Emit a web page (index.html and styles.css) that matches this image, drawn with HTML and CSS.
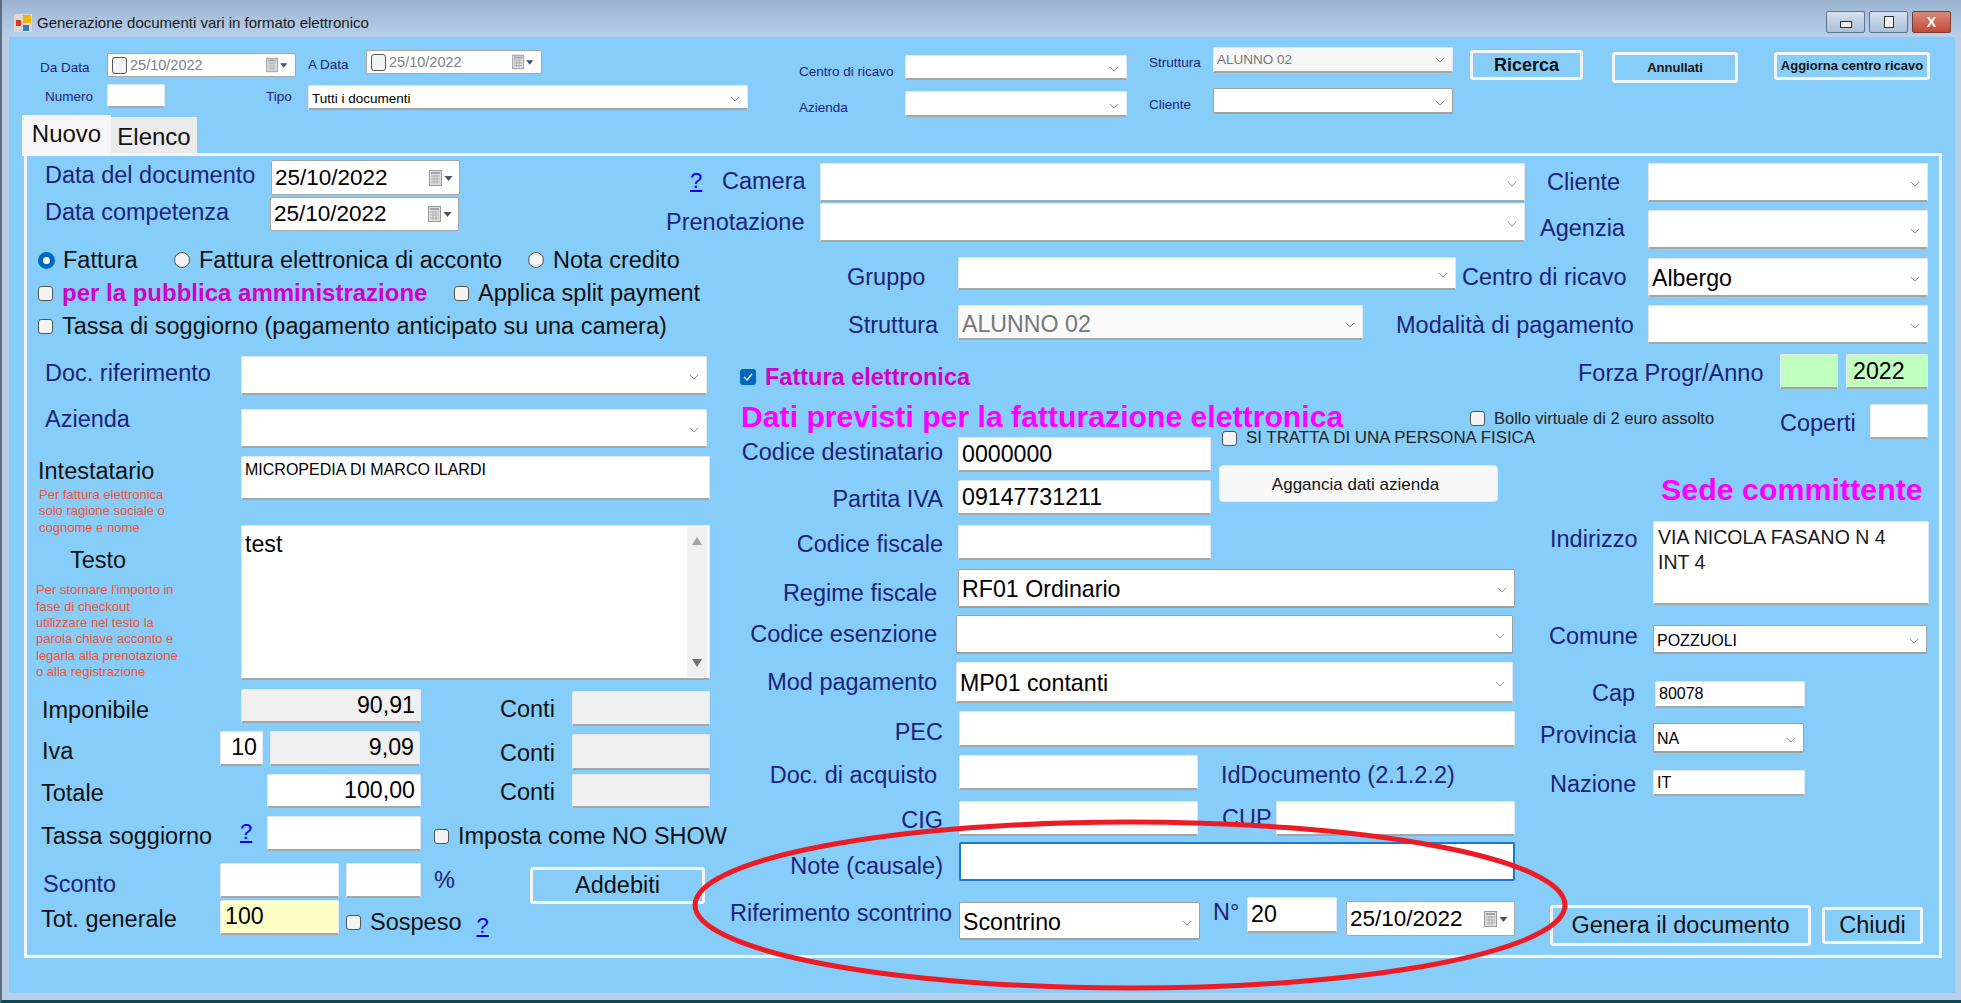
FILE: index.html
```html
<!DOCTYPE html>
<html lang="it">
<head>
    <meta charset="UTF-8">
    <title>Generazione documenti vari in formato elettronico</title>
    <link rel="stylesheet" href="styles.css">
</head>
<body>
<svg class="defs" width="0" height="0">
    <symbol id="chev" viewBox="0 0 12 7"><path d="M1 1l5 5 5-5" fill="none" stroke="#808080" stroke-width="1.1"/></symbol>
    <symbol id="cal" viewBox="0 0 26 20">
        <rect x="1.5" y="2.5" width="12" height="15" fill="#dedede" stroke="#999"/>
        <rect x="3" y="4" width="9" height="2" fill="#9aa6b4"/>
        <path d="M3 8h9M3 11h9M3 14h9M6 7v9M9 7v9" stroke="#b0b0b0" fill="none"/>
        <path d="M16.500 8h8l-4 5z" fill="#44546a"/>
    </symbol>
</svg>

<div class="window">
    <div class="titlebar">
        <svg class="appicon" width="18" height="18" viewBox="0 0 18 18">
            <rect width="18" height="18" fill="#d9d9d9"/>
            <rect x="9" y="1" width="8" height="8" fill="#f4b400"/>
            <rect x="2" y="6" width="5" height="6" fill="#d8361f"/>
            <rect x="9" y="11" width="6" height="6" fill="#3b78c4"/>
        </svg>
        <span class="title">Generazione documenti vari in formato elettronico</span>
        <div class="winbtns">
            <div class="winbtn"><span class="g-min"></span></div>
            <div class="winbtn"><span class="g-max"></span></div>
            <div class="winbtn close">X</div>
        </div>
    </div>

    <div class="client">
        <div class="filters">
            <div class="fgroup mt-13 ml-31">
                <div class="row h-34">
                    <div class="lb sm w-67 mt-10">Da Data</div>
                    <div class="fld date small w-189 h-24 mt-3"><i class="cb-sm"></i><span class="grey">25/10/2022</span><svg class="calicon"><use href="#cal"/></svg></div>
                    <div class="lb sm w-58 ml-12 mt-7">A Data</div>
                    <div class="fld date small w-176 h-24"><i class="cb-sm"></i><span class="grey">25/10/2022</span><svg class="calicon"><use href="#cal"/></svg></div>
                </div>
                <div class="row">
                    <div class="lb sm w-62 ml-5 mt-5">Numero</div>
                    <div class="fld w-58 h-24"></div>
                    <div class="lb sm w-42 ml-101 mt-5">Tipo</div>
                    <div class="fld cmb small w-440 h-25 mt-1">Tutti i documenti<svg class="chev"><use href="#chev"/></svg></div>
                </div>
            </div>
            <div class="fgroup mt-18 ml-51">
                <div class="row h-36">
                    <div class="lb sm w-106 mt-9">Centro di ricavo</div>
                    <div class="fld cmb w-222 h-25"><svg class="chev"><use href="#chev"/></svg></div>
                </div>
                <div class="row">
                    <div class="lb sm w-106 mt-9">Azienda</div>
                    <div class="fld cmb w-222 h-26"><svg class="chev"><use href="#chev"/></svg></div>
                </div>
            </div>
            <div class="fgroup mt-10 ml-22">
                <div class="row h-41">
                    <div class="lb sm w-64 mt-8">Struttura</div>
                    <div class="fld cmb small off w-240 h-26">ALUNNO 02<svg class="chev"><use href="#chev"/></svg></div>
                </div>
                <div class="row">
                    <div class="lb sm w-64 mt-9">Cliente</div>
                    <div class="fld cmb dark w-240 h-26"><svg class="chev"><use href="#chev"/></svg></div>
                </div>
            </div>
            <div class="btn b-search ml-17 mt-13 w-113 h-30">Ricerca</div>
            <div class="btn b-small ml-29 mt-15 w-126 h-31">Annullati</div>
            <div class="btn b-small b-top ml-36 mt-15 w-156 h-28">Aggiorna centro ricavo</div>
        </div>

        <div class="tabs">
            <div class="tab active">Nuovo</div>
            <div class="tab">Elenco</div>
        </div>

        <div class="panel">
            <div class="col-left">
                <div class="row mt-4 h-35">
                    <div class="lb w-226 ml-18 mt-2">Data del documento</div>
                    <div class="fld date w-189 h-35">25/10/2022<svg class="calicon"><use href="#cal"/></svg></div>
                </div>
                <div class="row mt-2 h-34">
                    <div class="lb w-225 ml-18 mt-2">Data competenza</div>
                    <div class="fld date w-189 h-34">25/10/2022<svg class="calicon"><use href="#cal"/></svg></div>
                </div>
                <div class="row mt-16 ml-11">
                    <div class="opt w-136"><i class="radio on"></i>Fattura</div>
                    <div class="opt w-354"><i class="radio"></i>Fattura elettronica di acconto</div>
                    <div class="opt"><i class="radio"></i>Nota credito</div>
                </div>
                <div class="row mt-7 ml-11">
                    <div class="opt w-416"><i class="cb"></i><b class="pa">per la pubblica amministrazione</b></div>
                    <div class="opt"><i class="cb"></i>Applica split payment</div>
                </div>
                <div class="row mt-7 ml-11">
                    <div class="opt"><i class="cb"></i>Tassa di soggiorno (pagamento anticipato su una camera)</div>
                </div>
                <div class="row mt-17 h-39">
                    <div class="lb w-196 ml-18 mt-4">Doc. riferimento</div>
                    <div class="fld cmb w-466 h-39"><svg class="chev"><use href="#chev"/></svg></div>
                </div>
                <div class="row mt-14 h-39">
                    <div class="lb w-196 ml-18 mt-n3">Azienda</div>
                    <div class="fld cmb w-466 h-39"><svg class="chev"><use href="#chev"/></svg></div>
                </div>
                <div class="row mt-8">
                    <div class="w-214">
                        <div class="lb k ml-11 mt-2">Intestatario</div>
                        <div class="note ml-12 mt-3">Per fattura elettronica<br>solo ragione sociale o<br>cognome e nome</div>
                        <div class="lb k ml-43 mt-11">Testo</div>
                        <div class="note ml-9 mt-9">Per stornare l'importo in<br>fase di checkout<br>utilizzare nel testo la<br>parola chiave acconto e<br>legarla alla prenotazione<br>o alla registrazione</div>
                    </div>
                    <div>
                        <div class="fld area int w-469 h-44"><span class="tx16">MICROPEDIA DI MARCO ILARDI</span></div>
                        <div class="fld area memo w-469 h-155 mt-25">test
                            <div class="vscroll"><span class="sb-up"></span><span class="sb-dn"></span></div>
                        </div>
                    </div>
                </div>
                <div class="row mt-8 h-42">
                    <div class="lb k w-199 ml-15 mt-8">Imponibile</div>
                    <div class="fld num off w-180 h-34">90,91</div>
                    <div class="lb k w-72 ml-79 mt-7">Conti</div>
                    <div class="fld off w-138 h-35 mt-2"></div>
                </div>
                <div class="row h-43">
                    <div class="lb k w-178 ml-15 mt-7">Iva</div>
                    <div class="fld num w-43 h-35">10</div>
                    <div class="fld num off w-150 h-35 ml-7">9,09</div>
                    <div class="lb k w-72 ml-80 mt-9">Conti</div>
                    <div class="fld off w-138 h-36 mt-3"></div>
                </div>
                <div class="row h-42">
                    <div class="lb k w-226 ml-14 mt-6">Totale</div>
                    <div class="fld num w-154 h-34">100,00</div>
                    <div class="lb k w-72 ml-79 mt-5">Conti</div>
                    <div class="fld off w-138 h-34"></div>
                </div>
                <div class="row h-47">
                    <div class="lb k w-199 ml-14 mt-7">Tassa soggiorno</div>
                    <a class="lb help w-27 mt-3" href="#">?</a>
                    <div class="fld w-154 h-35"></div>
                    <div class="opt ml-13 mt-8"><i class="cb"></i>Imposta come NO SHOW</div>
                </div>
                <div class="row h-37">
                    <div class="lb w-177 ml-16 mt-8">Sconto</div>
                    <div class="fld w-119 h-35"></div>
                    <div class="fld w-75 h-35 ml-7"></div>
                    <div class="lb w-96 ml-13 mt-4">%</div>
                    <div class="btn b-big w-175 h-37 mt-4">Addebiti</div>
                </div>
                <div class="row">
                    <div class="lb k w-179 ml-14 mt-6">Tot. generale</div>
                    <div class="fld yellow w-119 h-35">100</div>
                    <div class="opt ml-7 mt-10"><i class="cb"></i>Sospeso</div>
                    <a class="lb help ml-15 mt-13" href="#">?</a>
                </div>
            </div>

            <div class="col-main">
                <div class="top-rows">
                    <div class="row mt-7 h-40">
                        <a class="lb help w-32 ml-24 mt-5" href="#">?</a>
                        <div class="lb w-98 mt-5">Camera</div>
                        <div class="fld cmb w-705 h-39"><svg class="chev"><use href="#chev"/></svg></div>
                        <div class="lb w-101 ml-22 mt-6">Cliente</div>
                        <div class="fld cmb w-280 h-39"><svg class="chev"><use href="#chev"/></svg></div>
                    </div>
                    <div class="row h-46">
                        <div class="lb w-154 mt-6">Prenotazione</div>
                        <div class="fld cmb w-705 h-39"><svg class="chev"><use href="#chev"/></svg></div>
                        <div class="lb w-108 ml-15 mt-12">Agenzia</div>
                        <div class="fld cmb w-280 h-39 mt-7"><svg class="chev"><use href="#chev"/></svg></div>
                    </div>
                </div>
                <div class="row mt-8 h-48">
                    <div class="lb w-111 ml-117 mt-7">Gruppo</div>
                    <div class="fld cmb w-498 h-33"><svg class="chev"><use href="#chev"/></svg></div>
                    <div class="lb w-186 ml-6 mt-7">Centro di ricavo</div>
                    <div class="fld cmb w-280 h-39 mt-1">Albergo<svg class="chev"><use href="#chev"/></svg></div>
                </div>
                <div class="row h-49">
                    <div class="lb w-110 ml-118 mt-7">Struttura</div>
                    <div class="fld cmb off-cmb w-405 h-35">ALUNNO 02<svg class="chev"><use href="#chev"/></svg></div>
                    <div class="lb w-252 ml-33 mt-7">Modalità di pagamento</div>
                    <div class="fld cmb w-280 h-39"><svg class="chev"><use href="#chev"/></svg></div>
                </div>
                <div class="row h-46">
                    <div class="opt w-838 ml-10 mt-10 fe"><i class="cb blue"><svg viewBox="0 0 16 16"><path d="M4 8l3 3 5-6" fill="none" stroke="#fff" stroke-width="1.4"/></svg></i><b>Fattura elettronica</b></div>
                    <div class="lb w-202 mt-6">Forza Progr/Anno</div>
                    <div class="fld green w-58 h-35"></div>
                    <div class="fld green w-82 h-35 ml-8">2022</div>
                </div>
                <div class="row h-37">
                    <div class="heading w-729 ml-11">Dati previsti per la fatturazione elettronica</div>
                    <div class="opt opt-sm bollo w-310 mt-5"><i class="cb"></i>Bollo virtuale di 2 euro assolto</div>
                    <div class="lb w-90 mt-10">Coperti</div>
                    <div class="fld w-58 h-35 mt-4"></div>
                </div>

                <div class="lower">
                    <div class="lower-left">
                        <div class="row">
                            <div>
                                <div class="row h-43">
                                    <div class="lb r w-213 mt-2">Codice destinatario</div>
                                    <div class="fld w-253 h-35 ml-15">0000000</div>
                                </div>
                                <div class="row h-45">
                                    <div class="lb r w-213 mt-6">Partita IVA</div>
                                    <div class="fld w-253 h-35 ml-15">09147731211</div>
                                </div>
                                <div class="row h-44">
                                    <div class="lb r w-213 mt-6">Codice fiscale</div>
                                    <div class="fld w-253 h-35 ml-15"></div>
                                </div>
                            </div>
                            <div class="ml-8">
                                <div class="opt opt-sm ml-3 mt-n12"><i class="cb"></i>SI TRATTA DI UNA PERSONA FISICA</div>
                                <div class="btn b-light w-279 h-37 mt-14">Aggancia dati azienda</div>
                            </div>
                        </div>
                        <div class="row h-46">
                            <div class="lb r w-207 mt-11">Regime fiscale</div>
                            <div class="fld cmb dark w-557 h-39 ml-21">RF01 Ordinario<svg class="chev"><use href="#chev"/></svg></div>
                        </div>
                        <div class="row h-47">
                            <div class="lb r w-207 mt-6">Codice esenzione</div>
                            <div class="fld cmb dark w-557 h-39 ml-19"><svg class="chev"><use href="#chev"/></svg></div>
                        </div>
                        <div class="row h-49">
                            <div class="lb r w-207 mt-7">Mod pagamento</div>
                            <div class="fld cmb w-557 h-41 ml-19">MP01 contanti<svg class="chev"><use href="#chev"/></svg></div>
                        </div>
                        <div class="row h-44">
                            <div class="lb r w-213 mt-8">PEC</div>
                            <div class="fld w-556 h-36 ml-16"></div>
                        </div>
                        <div class="row h-46">
                            <div class="lb r w-207 mt-7">Doc. di acquisto</div>
                            <div class="fld w-239 h-35 ml-22"></div>
                            <div class="lb ml-23 mt-7">IdDocumento (2.1.2.2)</div>
                        </div>
                        <div class="row h-41">
                            <div class="lb r w-213 mt-6">CIG</div>
                            <div class="fld w-239 h-35 ml-16"></div>
                            <div class="lb w-54 ml-24 mt-4">CUP</div>
                            <div class="fld w-239 h-35"></div>
                        </div>
                        <div class="row h-55">
                            <div class="lb r w-213 mt-11">Note (causale)</div>
                            <div class="fld focus w-556 h-39 ml-16"></div>
                        </div>
                        <div class="row">
                            <div class="lb w-220 mt-3">Riferimento scontrino</div>
                            <div class="fld cmb dark w-241 h-38 ml-9 mt-5">Scontrino<svg class="chev"><use href="#chev"/></svg></div>
                            <div class="lb w-34 ml-13 mt-2">N°</div>
                            <div class="fld w-90 h-36">20</div>
                            <div class="fld date w-169 h-35 ml-9 mt-4">25/10/2022<svg class="calicon"><use href="#cal"/></svg></div>
                        </div>
                    </div>

                    <div class="lower-right">
                        <div class="heading sede ml-121 mt-35">Sede committente</div>
                        <div class="row mt-15">
                            <div class="lb w-103 ml-10 mt-5">Indirizzo</div>
                            <div class="fld area addr w-276 h-84">VIA NICOLA FASANO N 4<br>INT 4</div>
                        </div>
                        <div class="row mt-20">
                            <div class="lb w-104 ml-9 mt-n2">Comune</div>
                            <div class="fld cmb dark tx16 w-274 h-29">POZZUOLI<svg class="chev"><use href="#chev"/></svg></div>
                        </div>
                        <div class="row mt-27">
                            <div class="lb w-63 ml-52 mt-n1">Cap</div>
                            <div class="fld tx16 w-150 h-27">80078</div>
                        </div>
                        <div class="row mt-15">
                            <div class="lb w-113 mt-n1">Provincia</div>
                            <div class="fld cmb dark tx16 w-151 h-30">NA<svg class="chev"><use href="#chev"/></svg></div>
                        </div>
                        <div class="row mt-17">
                            <div class="lb w-103 ml-10 mt-1">Nazione</div>
                            <div class="fld tx16 w-152 h-26">IT</div>
                        </div>
                        <div class="row mt-108 ml-10">
                            <div class="btn b-big w-261 h-41">Genera il documento</div>
                            <div class="btn b-big w-101 h-37 ml-11 mt-2">Chiudi</div>
                        </div>
                    </div>
                </div>
            </div>
        </div>

        <svg class="circle" width="900" height="190" viewBox="0 0 900 190">
            <ellipse cx="441" cy="88" rx="435" ry="83" fill="none" stroke="#ed1c24" stroke-width="5"/>
        </svg>
    </div>
</div>
</body>
</html>
```

FILE: styles.css
```css
body {
    margin: 0;
    width: 1961px;
    height: 1003px;
    overflow: hidden;
    background: #b9cfe8;
    font-family: "Liberation Sans", Arial, sans-serif;
}
.defs {
    position: absolute;
}
.window {
    height: 1000px;
    border-bottom: 3px solid #0b4a52;
    border-left: 2px solid #5d6f80;
}
.titlebar {
    box-sizing: border-box;
    height: 37px;
    display: flex;
    align-items: center;
    padding-left: 12px;
    padding-top: 8px;
    background: linear-gradient(#9cb4d0, #b8d0ea);
}
.appicon {
    margin-right: 5px;
}
.title {
    font-size: 15px;
    color: #1a1a1a;
}
.winbtns {
    margin-left: auto;
    margin-right: 10px;
    display: flex;
    gap: 4px;
    margin-top: -2px;
}
.winbtn {
    width: 39px;
    height: 22px;
    border: 1px solid #5f7691;
    border-radius: 2px;
    background: linear-gradient(#d5e2f0, #a9bed6);
    display: flex;
    align-items: center;
    justify-content: center;
    box-sizing: border-box;
    font-size: 14px;
    font-weight: bold;
}
.winbtn.close {
    background: linear-gradient(#dc8a78, #c04a38);
    color: #fff;
    border-color: #7d3a30;
}
.g-min {
    width: 10px;
    height: 5px;
    margin-top: 5px;
    background: #eee;
    border: 1px solid #333;
}
.g-max {
    width: 8px;
    height: 10px;
    background: #eee;
    border: 1px solid #333;
}
.client {
    position: relative;
    margin-left: 7px;
    width: 1946px;
    height: 956px;
    background: #87cdfa;
}

.filters {
    height: 78px;
    display: flex;
    align-items: flex-start;
}
.row {
    display: flex;
    align-items: flex-start;
}
.lb {
    display: block;
    height: 26px;
    line-height: 26px;
    font-size: 23.5px;
    color: #1c2378;
    white-space: nowrap;
}
.lb.sm {
    height: 16px;
    line-height: 16px;
    font-size: 13.5px;
}
.lb.k {
    color: #111;
}
.lb.r {
    text-align: right;
}
.help {
    color: #0000ee;
    text-decoration: underline;
    font-size: 22px;
}

.fld {
    box-sizing: border-box;
    display: flex;
    align-items: center;
    background: #fff;
    border: 1px solid #e4e8ec;
    border-bottom: 2px solid #a6a6a6;
    border-radius: 2px;
    padding-left: 3px;
    font-size: 23.2px;
    color: #000;
    white-space: nowrap;
}
.fld.small {
    font-size: 13.5px;
}
.cmb {
    padding-right: 7px;
    padding-top: 3px;
}
.chev {
    width: 10px;
    height: 6px;
    flex: none;
    margin-left: auto;
    margin-top: 1px;
}
.dark {
    border: 1px solid #a0a0a0;
    border-bottom: 2px solid #a0a0a0;
}
.off {
    background: #f0f0f0;
}
.small.off {
    background: #f6f6f6;
    color: #777;
    padding-top: 0;
}
.off-cmb {
    background: #fafafa;
    color: #777;
    padding-top: 5px;
}
.num {
    justify-content: flex-end;
    padding-right: 5px;
}
.yellow {
    background: #ffffc8;
    padding-left: 4px;
}
.green {
    background: #c0ffc0;
    padding-left: 6px;
}
.focus {
    border: 2px solid #1a78d0;
}
.date {
    border: 1px solid #a6a6a6;
    padding-right: 5px;
    font-size: 22.5px;
}
.calicon {
    width: 26px;
    height: 20px;
    margin-left: auto;
    flex: none;
}
.date.small {
    padding-left: 4px;
    font-size: 14.5px;
}
.date.small .calicon {
    transform: scale(.9);
}
.cb-sm {
    width: 13px;
    height: 15px;
    margin-right: 3px;
    border: 1px solid #555;
    border-radius: 3px;
    background: #f4f4f4;
    flex: none;
}
.grey {
    color: #808080;
}
.area {
    align-items: flex-start;
    padding-top: 2px;
    position: relative;
}
.int {
    padding-top: 4px;
}
.memo {
    padding-top: 5px;
    line-height: 26px;
}
.tx16 {
    font-size: 16px;
}
.addr {
    display: block;
    font-size: 19.5px;
    line-height: 25px;
    padding-left: 4px;
    padding-top: 3px;
    color: #1a1a1a;
}
.vscroll {
    position: absolute;
    top: 1px;
    bottom: 1px;
    right: 2px;
    width: 20px;
    background: #f0f0f0;
}
.sb-up,
.sb-dn {
    position: absolute;
    left: 5px;
    width: 0;
    height: 0;
    border-left: 5px solid transparent;
    border-right: 5px solid transparent;
}
.sb-up {
    top: 10px;
    border-bottom: 8px solid #a3a3a3;
}
.sb-dn {
    bottom: 10px;
    border-top: 8px solid #707070;
}

.btn {
    box-sizing: border-box;
    display: flex;
    align-items: center;
    justify-content: center;
    border: 3px solid #f4f6f8;
    border-radius: 3px;
    color: #111;
    white-space: nowrap;
    flex: none;
}
.b-search {
    font-size: 18px;
    font-weight: bold;
}
.b-small {
    font-size: 13px;
    font-weight: bold;
}
.b-top {
    align-items: flex-start;
    padding-top: 3px;
}
.b-big {
    font-size: 23.5px;
}
.b-light {
    background: #f8f8f8;
    border: 1px solid #e4e8ec;
    font-size: 17px;
    border-radius: 4px;
    padding-right: 6px;
    padding-top: 2px;
}

.tabs {
    position: relative;
    z-index: 1;
    height: 38px;
    display: flex;
    align-items: flex-start;
    padding-left: 13px;
}
.tab {
    box-sizing: border-box;
    width: 86px;
    height: 36px;
    margin-top: 2px;
    background: #ebebeb;
    text-align: center;
    font-size: 24px;
    line-height: 39px;
    color: #111;
}
.tab.active {
    width: 89px;
    height: 41px;
    margin-top: 0;
    background: #f6f6f6;
    line-height: 38px;
}
.panel {
    box-sizing: border-box;
    margin-left: 15px;
    width: 1918px;
    height: 805px;
    border: 3px solid #f4f4f4;
    display: flex;
}
.col-left {
    width: 703px;
    flex: none;
}
.col-main {
    flex: 1;
}
.top-rows {
    margin-left: -64px;
}
.opt {
    display: flex;
    align-items: center;
    gap: 8px;
    height: 26px;
    font-size: 23.5px;
    color: #111;
    white-space: nowrap;
}
.opt-sm {
    font-size: 16.9px;
    color: #222;
}
.bollo {
    font-size: 16.5px;
}
.fe {
    color: #d400c8;
}
.pa {
    color: #d400c8;
    font-size: 24px;
}
.cb {
    width: 15px;
    height: 15px;
    box-sizing: border-box;
    border: 1.5px solid #555;
    border-radius: 3px;
    background: #f4f4f4;
    flex: none;
    margin-right: 1px;
}
.cb.blue {
    background: #0067c0;
    border: none;
    height: 16px;
    width: 16px;
}
.cb.blue svg {
    display: block;
    width: 16px;
    height: 16px;
}
.radio {
    width: 16px;
    height: 16px;
    box-sizing: border-box;
    border: 1.5px solid #555;
    border-radius: 50%;
    background: #f4f4f4;
    flex: none;
    margin-right: 1px;
}
.radio.on {
    border: 5px solid #0067c0;
    background: #fff;
    width: 17px;
    height: 17px;
    margin-right: 0;
}
.note {
    font-size: 13px;
    line-height: 16.4px;
    color: #f4522e;
    white-space: nowrap;
}
.heading {
    height: 34px;
    line-height: 34px;
    font-size: 30.2px;
    color: #ff00ff;
    white-space: nowrap;
    font-weight: bold;
}
.sede {
    font-size: 30.4px;
}
.lower {
    display: flex;
}
.lower-left {
    width: 810px;
    flex: none;
}
.circle {
    position: absolute;
    left: 680px;
    top: 780px;
    pointer-events: none;
}

.mt-n12 { margin-top: -12px; }
.mt-n3 { margin-top: -3px; }
.mt-n2 { margin-top: -2px; }
.mt-n1 { margin-top: -1px; }
.mt-1 { margin-top: 1px; }
.mt-2 { margin-top: 2px; }
.mt-3 { margin-top: 3px; }
.mt-4 { margin-top: 4px; }
.mt-5 { margin-top: 5px; }
.mt-6 { margin-top: 6px; }
.mt-7 { margin-top: 7px; }
.mt-8 { margin-top: 8px; }
.mt-9 { margin-top: 9px; }
.mt-10 { margin-top: 10px; }
.mt-11 { margin-top: 11px; }
.mt-12 { margin-top: 12px; }
.mt-13 { margin-top: 13px; }
.mt-14 { margin-top: 14px; }
.mt-15 { margin-top: 15px; }
.mt-16 { margin-top: 16px; }
.mt-17 { margin-top: 17px; }
.mt-18 { margin-top: 18px; }
.mt-20 { margin-top: 20px; }
.mt-25 { margin-top: 25px; }
.mt-27 { margin-top: 27px; }
.mt-35 { margin-top: 35px; }
.mt-108 { margin-top: 108px; }

.ml-3 { margin-left: 3px; }
.ml-5 { margin-left: 5px; }
.ml-6 { margin-left: 6px; }
.ml-7 { margin-left: 7px; }
.ml-8 { margin-left: 8px; }
.ml-9 { margin-left: 9px; }
.ml-10 { margin-left: 10px; }
.ml-11 { margin-left: 11px; }
.ml-12 { margin-left: 12px; }
.ml-13 { margin-left: 13px; }
.ml-14 { margin-left: 14px; }
.ml-15 { margin-left: 15px; }
.ml-16 { margin-left: 16px; }
.ml-17 { margin-left: 17px; }
.ml-18 { margin-left: 18px; }
.ml-19 { margin-left: 19px; }
.ml-21 { margin-left: 21px; }
.ml-22 { margin-left: 22px; }
.ml-23 { margin-left: 23px; }
.ml-24 { margin-left: 24px; }
.ml-29 { margin-left: 29px; }
.ml-31 { margin-left: 31px; }
.ml-33 { margin-left: 33px; }
.ml-36 { margin-left: 36px; }
.ml-43 { margin-left: 43px; }
.ml-51 { margin-left: 51px; }
.ml-52 { margin-left: 52px; }
.ml-79 { margin-left: 79px; }
.ml-80 { margin-left: 80px; }
.ml-101 { margin-left: 101px; }
.ml-117 { margin-left: 117px; }
.ml-118 { margin-left: 118px; }
.ml-121 { margin-left: 121px; }

.w-27 { width: 27px; }
.w-32 { width: 32px; }
.w-34 { width: 34px; }
.w-42 { width: 42px; }
.w-43 { width: 43px; }
.w-54 { width: 54px; }
.w-58 { width: 58px; }
.w-62 { width: 62px; }
.w-63 { width: 63px; }
.w-64 { width: 64px; }
.w-67 { width: 67px; }
.w-72 { width: 72px; }
.w-75 { width: 75px; }
.w-82 { width: 82px; }
.w-90 { width: 90px; }
.w-96 { width: 96px; }
.w-98 { width: 98px; }
.w-101 { width: 101px; }
.w-103 { width: 103px; }
.w-104 { width: 104px; }
.w-106 { width: 106px; }
.w-108 { width: 108px; }
.w-110 { width: 110px; }
.w-111 { width: 111px; }
.w-113 { width: 113px; }
.w-119 { width: 119px; }
.w-126 { width: 126px; }
.w-136 { width: 136px; }
.w-138 { width: 138px; }
.w-150 { width: 150px; }
.w-151 { width: 151px; }
.w-152 { width: 152px; }
.w-154 { width: 154px; }
.w-156 { width: 156px; }
.w-169 { width: 169px; }
.w-175 { width: 175px; }
.w-176 { width: 176px; }
.w-177 { width: 177px; }
.w-178 { width: 178px; }
.w-179 { width: 179px; }
.w-180 { width: 180px; }
.w-186 { width: 186px; }
.w-189 { width: 189px; }
.w-196 { width: 196px; }
.w-199 { width: 199px; }
.w-202 { width: 202px; }
.w-207 { width: 207px; }
.w-213 { width: 213px; }
.w-214 { width: 214px; }
.w-220 { width: 220px; }
.w-222 { width: 222px; }
.w-225 { width: 225px; }
.w-226 { width: 226px; }
.w-239 { width: 239px; }
.w-240 { width: 240px; }
.w-241 { width: 241px; }
.w-252 { width: 252px; }
.w-253 { width: 253px; }
.w-261 { width: 261px; }
.w-274 { width: 274px; }
.w-276 { width: 276px; }
.w-279 { width: 279px; }
.w-280 { width: 280px; }
.w-310 { width: 310px; }
.w-354 { width: 354px; }
.w-405 { width: 405px; }
.w-416 { width: 416px; }
.w-440 { width: 440px; }
.w-466 { width: 466px; }
.w-469 { width: 469px; }
.w-498 { width: 498px; }
.w-556 { width: 556px; }
.w-557 { width: 557px; }
.w-705 { width: 705px; }
.w-729 { width: 729px; }
.w-838 { width: 838px; }

.h-24 { height: 24px; }
.h-25 { height: 25px; }
.h-26 { height: 26px; }
.h-27 { height: 27px; }
.h-28 { height: 28px; }
.h-29 { height: 29px; }
.h-30 { height: 30px; }
.h-31 { height: 31px; }
.h-33 { height: 33px; }
.h-34 { height: 34px; }
.h-35 { height: 35px; }
.h-36 { height: 36px; }
.h-37 { height: 37px; }
.h-38 { height: 38px; }
.h-39 { height: 39px; }
.h-40 { height: 40px; }
.h-41 { height: 41px; }
.h-42 { height: 42px; }
.h-43 { height: 43px; }
.h-44 { height: 44px; }
.h-45 { height: 45px; }
.h-46 { height: 46px; }
.h-47 { height: 47px; }
.h-48 { height: 48px; }
.h-49 { height: 49px; }
.h-55 { height: 55px; }
.h-84 { height: 84px; }
.h-155 { height: 155px; }
```
